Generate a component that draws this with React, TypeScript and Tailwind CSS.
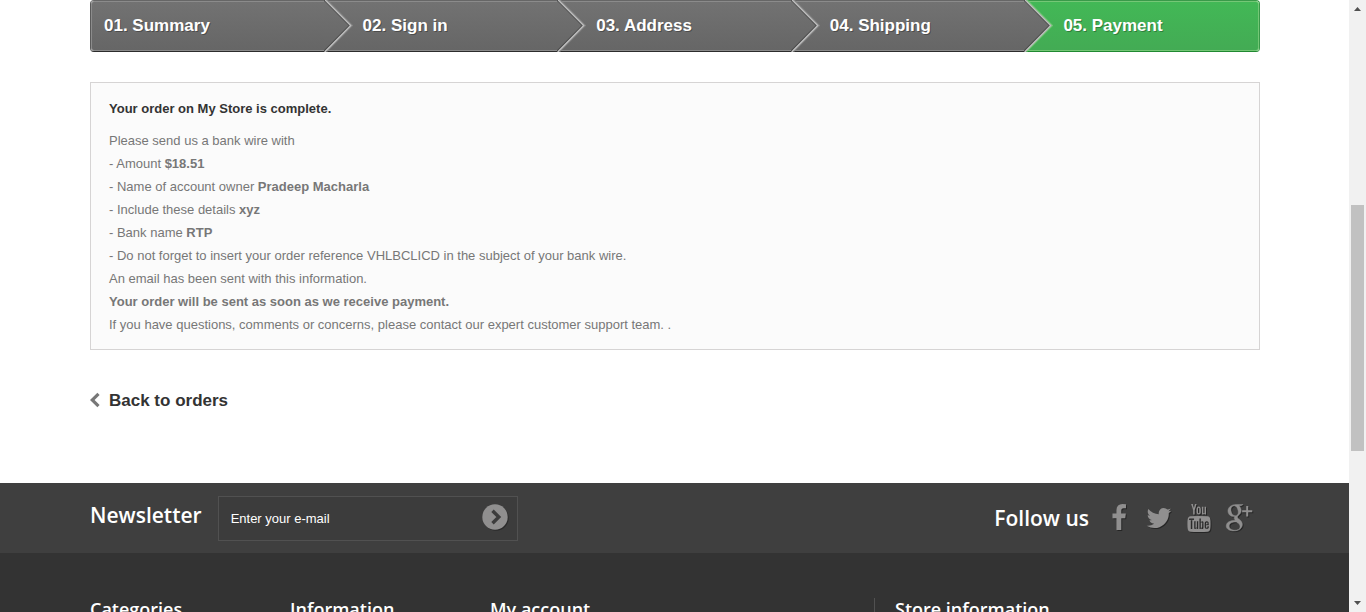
import React from "react";

const steps = ["01. Summary", "02. Sign in", "03. Address", "04. Shipping", "05. Payment"];

const textFont = "font-['Liberation_Sans',Arial,sans-serif]";
const titleFont = "font-['Open_Sans',sans-serif]";
const container = "mx-auto max-w-[1171px] pl-px";

function StepArrow({ last }: { last: boolean }) {
  return (
    <svg className="absolute -right-7 -top-px z-10 h-[52px] w-[29px]" viewBox="0 0 29 52" aria-hidden="true">
      <path d="M0 1H1L26 26L1 51H0Z" fill="url(#step-gray)" />
      <path d="M3 0L28.500 25.500L2.500 51.500" fill="none" stroke={last ? "#74c776" : "#858585"} strokeWidth="1.200" />
      <path d="M0 0L25.500 25.500L0 51" fill="none" stroke="#454545" strokeWidth="1.200" />
      <path d="M1.200 0L26.700 25.500L0.700 52" fill="none" stroke="#bdbdbd" strokeWidth="1.500" />
    </svg>
  );
}

function Steps() {
  return (
    <ol className="flex h-[52px]">
      <svg className="absolute h-0 w-0" aria-hidden="true">
        <defs>
          <linearGradient id="step-gray" x1="0" y1="0" x2="0" y2="1">
            <stop offset="0" stopColor="#727272" />
            <stop offset="1" stopColor="#666" />
          </linearGradient>
        </defs>
      </svg>
      {steps.map((label, i) => {
        const current = i === steps.length - 1;
        return (
          <li
            key={label}
            aria-current={current ? "step" : undefined}
            className={`relative flex flex-1 border-y ${
              current ? "rounded-r border-r border-t-[#399a49] border-r-[#399a49] border-b-[#208931]" : "border-t-[#666] border-b-[#2c2c2c]"
            } ${i === 0 ? "rounded-l border-l border-l-[#5a5a5a]" : ""}`}
          >
            <a
              href="#"
              className={`flex flex-1 items-center border-y text-[17px] leading-[22px] font-bold text-white [text-shadow:1px_1px_0_rgba(0,0,0,0.3)] ${
                current
                  ? "rounded-r-[3px] border-r border-[#74c776] bg-linear-to-b from-[#42b856] to-[#43ab54]"
                  : "border-[#8b8b8b] bg-linear-to-b from-[#727272] to-[#666]"
              } ${i === 0 ? "rounded-l-[3px] border-l pl-3" : "pl-[38px]"}`}
            >
              {label}
            </a>
            {!current && <StepArrow last={i === steps.length - 2} />}
          </li>
        );
      })}
    </ol>
  );
}

function SocialLink({ label, viewBox, children }: { label: string; viewBox: string; children: React.ReactNode }) {
  return (
    <a href="#" aria-label={label} className="flex w-10 justify-center">
      <svg viewBox={viewBox} className="h-7 w-7 fill-[#908f8f] drop-shadow-[1px_1px_0_rgba(0,0,0,0.4)]">
        {children}
      </svg>
    </a>
  );
}

function Social() {
  return (
    <section className="flex items-center pr-px">
      <h4 className={`${titleFont} mr-2.5 text-[21px] leading-[25px] font-semibold text-white`}>Follow us</h4>
      <SocialLink label="Facebook" viewBox="0 0 1792 1792">
        <path d="M1343 12v264h-157q-86 0-116 36t-30 108v189h293l-39 296h-254v759h-306v-759h-255v-296h255v-218q0-186 104-288.500t277-102.500q147 0 228 12z" />
      </SocialLink>
      <SocialLink label="Twitter" viewBox="0 0 1792 1792">
        <path d="M1684 408q-67 98-162 167 1 14 1 42 0 130-38 259.500t-115.500 248.500-184.500 210.500-258 146-323 54.500q-271 0-496-145 35 4 78 4 225 0 401-138-105-2-188-64.500t-114-159.500q33 5 61 5 43 0 85-11-112-23-185.500-111.500t-73.500-205.500v-4q68 38 146 41-66-44-105-115t-39-154q0-88 44-163 121 149 294.500 238.500t371.500 99.500q-8-38-8-74 0-134 94.500-228.500t228.500-94.500q140 0 236 102 109-21 205-78-37 115-142 178 93-10 186-50z" />
      </SocialLink>
      <SocialLink label="YouTube" viewBox="-128 0 1792 1792">
        <path d="M971 1244v211q0 67-39 67-23 0-45-22v-301q22-22 45-22 39 0 39 67zm338 1v46h-90v-46q0-68 45-68t45 68zm-966-218h107v-94h-312v94h105v569h100v-569zm288 569h89v-494h-89v378q-30 42-57 42-18 0-21-21-1-3-1-35v-364h-89v391q0 49 8 73 12 37 58 37 48 0 102-61v54zm429-148v-197q0-73-9-99-17-56-71-56-50 0-93 54v-217h-89v663h89v-48q45 55 93 55 54 0 71-55 9-27 9-100zm338-10v-13h-91q0 51-2 61-7 36-40 36-46 0-46-69v-87h179v-103q0-79-27-116-39-51-106-51-68 0-107 51-28 37-28 116v173q0 79 29 116 39 51 108 51 72 0 108-53 18-27 21-54 2-9 2-58zm-608-913v-210q0-69-43-69t-43 69v210q0 70 43 70t43-70zm719 751q0 234-26 350-14 59-58 99t-102 46q-184 21-555 21t-555-21q-58-6-102.500-46t-57.500-99q-26-112-26-350 0-234 26-350 14-59 58-99t103-47q183-20 554-20t555 20q58 7 102.500 47t57.500 99q26 112 26 350zm-998-1276h102l-121 399v271h-100v-271q-14-74-61-212-37-103-65-187h106l71 263zm370 333v175q0 81-28 118-38 51-106 51-67 0-105-51-28-38-28-118v-175q0-80 28-117 38-51 105-51 68 0 106 51 28 37 28 117zm335-162v499h-91v-55q-53 62-103 62-46 0-59-37-8-24-8-75v-394h91v367q0 33 1 35 3 22 21 22 27 0 57-43v-381h91z" />
      </SocialLink>
      <SocialLink label="Google Plus" viewBox="0 0 1792 1792">
        <g transform="translate(-20 1650) scale(1.02 -1.02)">
          <path
            fillRule="evenodd"
            stroke="#908f8f"
            strokeWidth="30"
            d="M799 796q0 -36 32 -70.500t77.500 -68t90.500 -73.500t77.500 -104t32.500 -142q0 -90 -48 -173q-72 -122 -211 -179.500t-298 -57.500q-132 0 -246.500 41.500t-171.500 137.500q-37 60 -37 131q0 81 44.500 150t118.500 115q131 82 404 100q-32 42 -47.500 74t-15.500 73q0 36 21 85q-46 -4 -68 -4q-148 0 -249.500 96.500t-101.500 244.500q0 82 36 159t99 131q77 66 182.500 98t217.500 32h418l-138 -88h-131q74 -63 112 -133t38 -160q0 -72 -24.500 -129.500t-59 -93t-69.500 -65t-59.500 -61.500t-24.500 -66zM657 884q38 0 78 16.500t66 43.500q53 57 53 159q0 58 -17 125t-48.500 129.500t-84.500 103.500t-117 41q-42 0 -82.500 -19.500t-65.500 -52.500q-47 -59 -47 -160q0 -46 10 -97.500t31.500 -103t52 -92.500t75 -67t96.500 -26zM658 -31q57 0 109.500 12.500t97 37.500t71.500 72t27 110q0 25 -7 49t-14.500 42t-27 41.500t-29.500 35t-38.500 34.500t-36.500 29t-41.500 30t-36.500 26q-16 2 -48 2q-53 0 -105 -7t-107.500 -25t-97 -46t-68.500 -74.500t-27 -105.500q0 -70 35 -123.500t91.500 -83t119 -44t127.500 -14.500z"
          />
          <path d="M1350 1500h126v-270h254v-126h-254v-270h-126v270h-254v126h254z" />
        </g>
      </SocialLink>
    </section>
  );
}

function Scrollbar() {
  return (
    <div className="flex w-[17px] shrink-0 flex-col items-center bg-[#f1f1f1]" aria-hidden="true">
      <svg viewBox="0 0 17 17" className="h-[17px] w-[17px] fill-[#505050]">
        <path d="M5 11L8.500 7L12 11Z" />
      </svg>
      <div className="flex-[188]" />
      <div className="w-[13px] flex-[246] bg-[#c1c1c1]" />
      <div className="flex-[144]" />
      <svg viewBox="0 0 17 17" className="h-[17px] w-[17px] fill-[#505050]">
        <path d="M5 6L8.500 10L12 6Z" />
      </svg>
    </div>
  );
}

export default function App() {
  return (
    <div className={`${textFont} flex h-screen overflow-hidden bg-white text-[13px] leading-[23px] text-[#777]`}>
      <div className="min-w-0 flex-1 overflow-hidden">
        <main className={container}>
          <Steps />
          <section className="mt-[30px] border border-[#d6d4d4] bg-[#fbfbfb] px-[18px] pt-3.5 pb-[13px]">
            <h3 className="mb-[9px] font-bold text-[#333]">Your order on My Store is complete.</h3>
            <p>Please send us a bank wire with</p>
            <p>- Amount <strong>$18.51</strong></p>
            <p>- Name of account owner <strong>Pradeep Macharla</strong></p>
            <p>- Include these details <strong>xyz</strong></p>
            <p>- Bank name <strong>RTP</strong></p>
            <p>- Do not forget to insert your order reference VHLBCLICD in the subject of your bank wire.</p>
            <p>An email has been sent with this information.</p>
            <p><strong>Your order will be sent as soon as we receive payment.</strong></p>
            <p>If you have questions, comments or concerns, please contact our <a href="#">expert customer support team. </a>.</p>
          </section>
          <nav className="flex pt-10 pb-[71px]">
            <a href="#" className="flex items-center gap-2 text-[17px] leading-[22px] font-bold text-[#333]">
              <svg viewBox="0 0 11 18" className="h-[18px] w-[11px]" aria-hidden="true">
                <path d="M8.500 1.800L2.200 8L8.500 14.200" fill="none" stroke="#777" strokeWidth="3.200" />
              </svg>
              Back to orders
            </a>
          </nav>
        </main>
        <footer className="bg-[#333]">
          <div className="bg-[#3f3f3f]">
            <div className={`${container} flex h-[70px] items-center justify-between`}>
              <form className="flex items-center gap-4" onSubmit={(e) => e.preventDefault()}>
                <label htmlFor="newsletter" className={`${titleFont} pb-1.5 text-[21px] leading-[25px] font-semibold text-white`}>
                  Newsletter
                </label>
                <div className="flex h-[45px] w-[300px] items-center border border-[#515151] bg-[#3c3c3c] pr-2 pl-3">
                  <input
                    id="newsletter"
                    type="email"
                    placeholder="Enter your e-mail"
                    className="min-w-0 flex-1 bg-transparent text-[13px] leading-[23px] text-white outline-none placeholder:text-white"
                  />
                  <button type="submit" aria-label="Subscribe" className="pb-0.5">
                    <svg viewBox="0 0 28 28" className="h-7 w-7 drop-shadow-[1px_1px_0_rgba(0,0,0,0.3)]">
                      <circle cx="14" cy="14" r="12.700" fill="#908f8f" />
                      <path d="M11.500 7.700L17.800 14L11.500 20.300" fill="none" stroke="#3c3c3c" strokeWidth="3.400" />
                    </svg>
                  </button>
                </div>
              </form>
              <Social />
            </div>
          </div>
          <div className={`${container} ${titleFont} flex pt-[45px] text-lg leading-[22px] font-semibold text-white`}>
            <h4 className="w-[200px]">Categories</h4>
            <h4 className="w-[200px]">Information</h4>
            <h4 className="flex-1">My account</h4>
            <h4 className="h-40 w-[386px] border-l border-[#515151] pl-5">Store information</h4>
          </div>
        </footer>
      </div>
      <Scrollbar />
    </div>
  );
}
